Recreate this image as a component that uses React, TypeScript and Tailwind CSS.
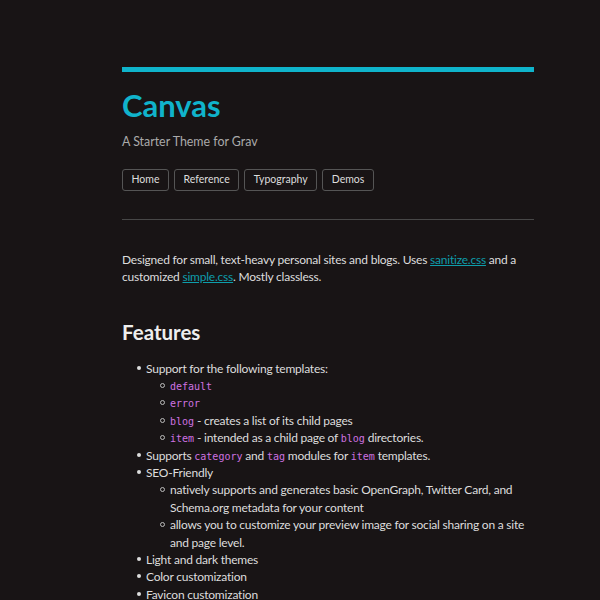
import React from 'react'

const navLinks = ['Home', 'Reference', 'Typography', 'Demos']

function Code({ children }: { children: React.ReactNode }) {
  return (
    <code className="font-['DejaVu_Sans_Mono',monospace] text-[10px] leading-none tracking-normal text-[#cf72e0]">
      {children}
    </code>
  )
}

function Sub({ children }: { children: React.ReactNode }) {
  return (
    <li className="flex">
      <span className="w-[24px] shrink-0 flex justify-end pr-[5px] pt-[6px]">
        <span className="w-[5px] h-[5px] rounded-full border border-[#bbb]" />
      </span>
      <span>{children}</span>
    </li>
  )
}

function Item({ children, sub }: { children: React.ReactNode; sub?: React.ReactNode }) {
  return (
    <li>
      <div className="flex">
        <span className="w-[24px] shrink-0 flex justify-end pr-[5px] pt-[6px]">
          <span className="w-[4px] h-[4px] rounded-full bg-[#ddd]" />
        </span>
        <span>{children}</span>
      </div>
      {sub && <ul className="pl-[24px]">{sub}</ul>}
    </li>
  )
}

export default function App() {
  return (
    <div className="min-h-[600px] bg-[#181415] text-[#ddd] font-['Lato',sans-serif]">
      <div className="w-[412px] ml-[122px] pt-[67px]">
        <div className="h-[5px] bg-[#0fb4cb]" />
        <h1 className="mt-[13px] text-[31px] leading-[40px] font-bold text-[#10b3cb]">Canvas</h1>
        <p className="mt-[8px] text-[12.4px] text-[#aaa]">A Starter Theme for Grav</p>
        <nav className="mt-[17px] flex gap-[5px]">
          {navLinks.map((l) => (
            <a
              key={l}
              className="h-[22px] px-[8.5px] flex items-center border border-[#555] rounded-[3px] text-[10.5px] text-[#ddd]"
            >
              {l}
            </a>
          ))}
        </nav>
        <hr className="mt-[28px] border-t border-[#474747]" />
        <p className="mt-[31px] text-[12px] tracking-[-0.22px] leading-[17px]">
          Designed for small, text-heavy personal sites and blogs. Uses{' '}
          <a className="underline text-[#0e9dab]">sanitize.css</a> and a customized{' '}
          <a className="underline text-[#0e9dab]">simple.css</a>. Mostly classless.
        </p>
        <h2 className="mt-[34px] text-[20.5px] leading-[26px] font-bold text-[#eee]">Features</h2>
        <ul className="mt-[15px] text-[12px] tracking-[-0.22px] leading-[17.4px]">
          <Item
            sub={
              <>
                <Sub><Code>default</Code></Sub>
                <Sub><Code>error</Code></Sub>
                <Sub><Code>blog</Code> - creates a list of its child pages</Sub>
                <Sub><Code>item</Code> - intended as a child page of <Code>blog</Code> directories.</Sub>
              </>
            }
          >
            Support for the following templates:
          </Item>
          <Item>
            Supports <Code>category</Code> and <Code>tag</Code> modules for <Code>item</Code> templates.
          </Item>
          <Item
            sub={
              <>
                <Sub>natively supports and generates basic OpenGraph, Twitter Card, and Schema.org metadata for your content</Sub>
                <Sub>allows you to customize your preview image for social sharing on a site and page level.</Sub>
              </>
            }
          >
            SEO-Friendly
          </Item>
          <Item>Light and dark themes</Item>
          <Item>Color customization</Item>
          <Item>Favicon customization</Item>
        </ul>
      </div>
    </div>
  )
}
